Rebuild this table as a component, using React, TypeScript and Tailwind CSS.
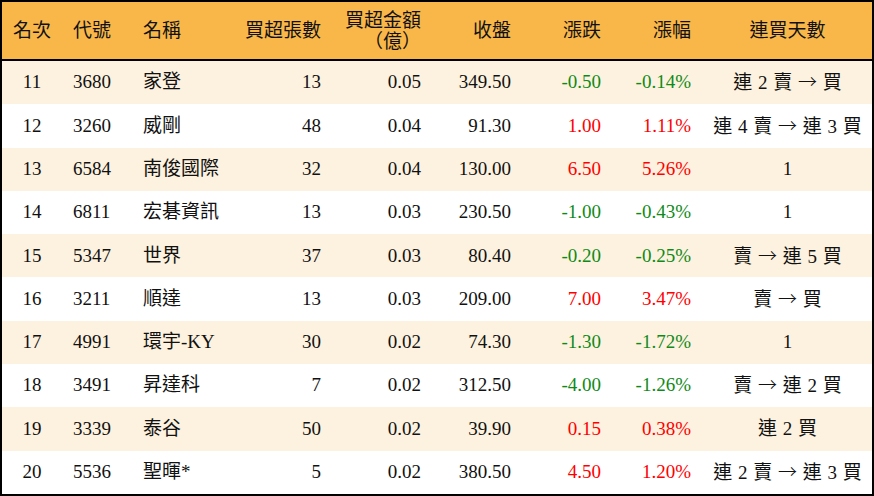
import React from "react"

type Row = {
  rank: number
  code: string
  name: string
  qty: number
  amount: string
  close: string
  change: string
  pct: string
  days: string
}

const rows: Row[] = [
  { rank: 11, code: "3680", name: "家登", qty: 13, amount: "0.05", close: "349.50", change: "-0.50", pct: "-0.14%", days: "連 2 賣 → 買" },
  { rank: 12, code: "3260", name: "威剛", qty: 48, amount: "0.04", close: "91.30", change: "1.00", pct: "1.11%", days: "連 4 賣 → 連 3 買" },
  { rank: 13, code: "6584", name: "南俊國際", qty: 32, amount: "0.04", close: "130.00", change: "6.50", pct: "5.26%", days: "1" },
  { rank: 14, code: "6811", name: "宏碁資訊", qty: 13, amount: "0.03", close: "230.50", change: "-1.00", pct: "-0.43%", days: "1" },
  { rank: 15, code: "5347", name: "世界", qty: 37, amount: "0.03", close: "80.40", change: "-0.20", pct: "-0.25%", days: "賣 → 連 5 買" },
  { rank: 16, code: "3211", name: "順達", qty: 13, amount: "0.03", close: "209.00", change: "7.00", pct: "3.47%", days: "賣 → 買" },
  { rank: 17, code: "4991", name: "環宇-KY", qty: 30, amount: "0.02", close: "74.30", change: "-1.30", pct: "-1.72%", days: "1" },
  { rank: 18, code: "3491", name: "昇達科", qty: 7, amount: "0.02", close: "312.50", change: "-4.00", pct: "-1.26%", days: "賣 → 連 2 買" },
  { rank: 19, code: "3339", name: "泰谷", qty: 50, amount: "0.02", close: "39.90", change: "0.15", pct: "0.38%", days: "連 2 買" },
  { rank: 20, code: "5536", name: "聖暉*", qty: 5, amount: "0.02", close: "380.50", change: "4.50", pct: "1.20%", days: "連 2 賣 → 連 3 買" },
]

const cols = "grid grid-cols-[60px_70px_98px_91px_100px_90px_90px_90px_181px]"

// arrow drawn with the CJK face so it's a full-width arrow like the source
function Days({ text }: { text: string }) {
  const parts = text.split("→")
  return (
    <>
      {parts.map((p, i) => (
        <React.Fragment key={i}>
          {i > 0 && <span className="font-['Noto_Sans_CJK_TC',sans-serif] font-light">→</span>}
          {p}
        </React.Fragment>
      ))}
    </>
  )
}

export default function App() {
  return (
    <div
      className="w-[874px] h-[496px] border-2 border-black flex flex-col text-[19px] text-[#111] bg-white"
      style={{ fontFamily: "'Liberation Serif', 'Noto Sans CJK TC', serif" }}
    >
      {/* Header */}
      <div className={`${cols} h-[59px] shrink-0 bg-[#f9b74a] border-b-2 border-black items-center leading-[21px]`}>
        <div className="text-center">名次</div>
        <div className="pl-[11px]">代號</div>
        <div className="pl-[11px]">名稱</div>
        <div className="text-right">買超張數</div>
        <div className="text-right flex flex-col">
          <span>買超金額</span>
          <span>（億）</span>
        </div>
        <div className="text-right">收盤</div>
        <div className="text-right">漲跌</div>
        <div className="text-right">漲幅</div>
        <div className="pl-[12px] text-center">連買天數</div>
      </div>

      {/* Body */}
      {rows.map((r, i) => {
        const up = !r.change.startsWith("-")
        const tone = up ? "text-[#ff0000]" : "text-[#0f8a17]"
        return (
          <div
            key={r.rank}
            className={`${cols} flex-1 items-center ${i % 2 === 0 ? "bg-[#fdf2df]" : "bg-white"}`}
          >
            <div className="text-center">{r.rank}</div>
            <div className="pl-[11px]">{r.code}</div>
            <div className="pl-[11px] whitespace-nowrap">{r.name}</div>
            <div className="text-right">{r.qty}</div>
            <div className="text-right">{r.amount}</div>
            <div className="text-right">{r.close}</div>
            <div className={`text-right ${tone}`}>{r.change}</div>
            <div className={`text-right ${tone}`}>{r.pct}</div>
            <div className="pl-[12px] text-center whitespace-pre [word-spacing:1px]">
              <Days text={r.days} />
            </div>
          </div>
        )
      })}
    </div>
  )
}
